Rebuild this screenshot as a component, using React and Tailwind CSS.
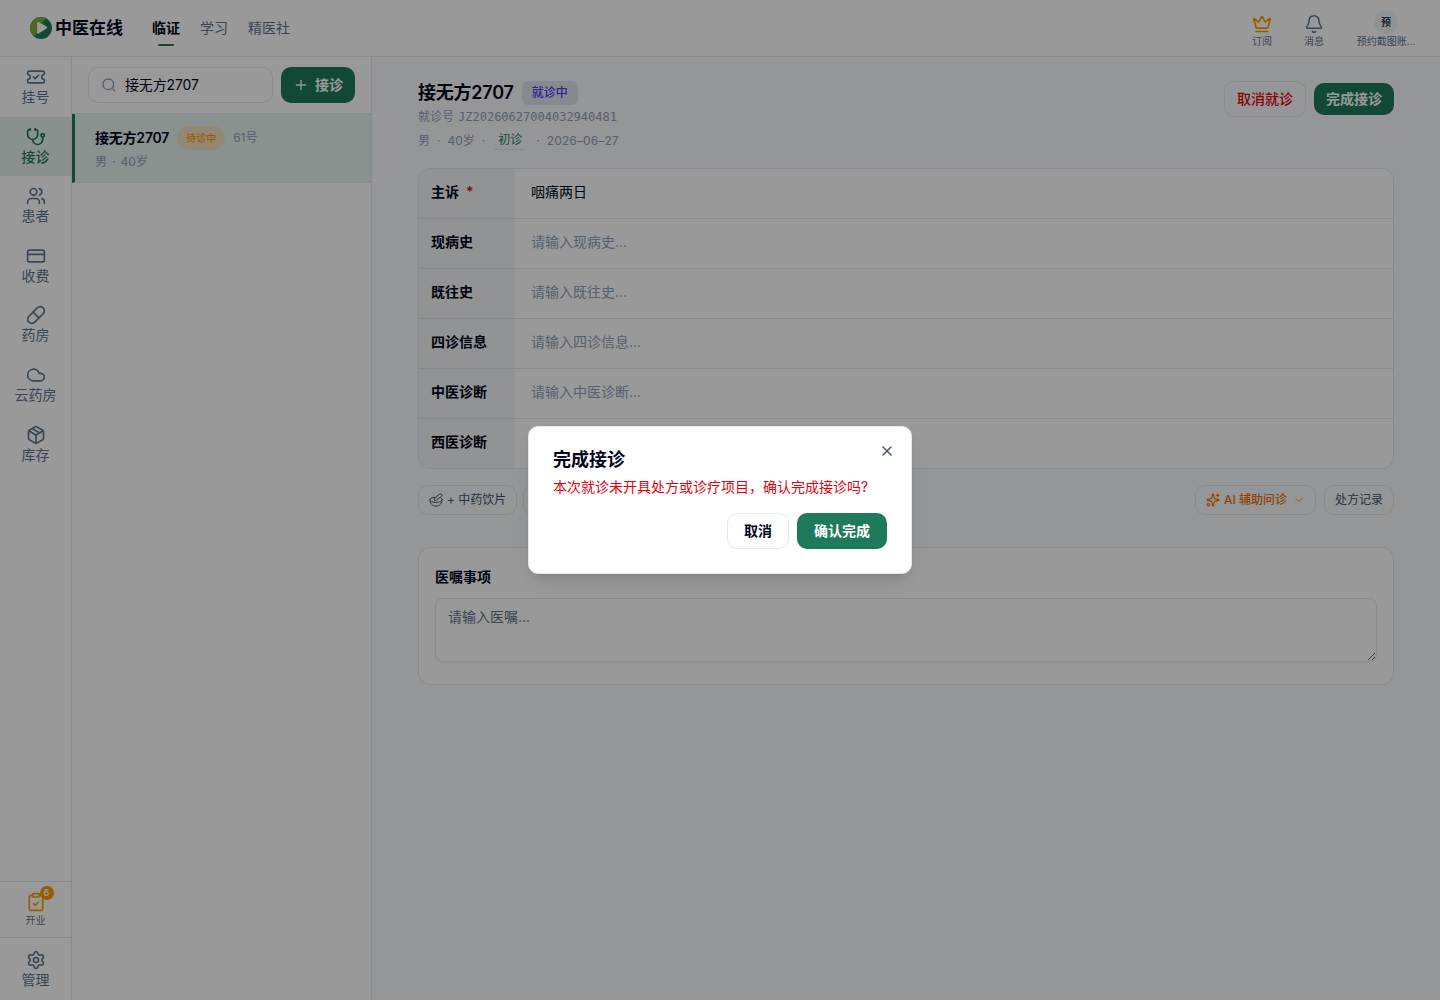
import clsx from 'clsx'
import {
  Bell,
  ChevronDown,
  ClipboardCheck,
  Cloud,
  CreditCard,
  Crown,
  Package,
  Pill,
  Plus,
  Search,
  Settings,
  Sparkles,
  Stethoscope,
  TicketCheck,
  Users,
  X,
} from 'lucide-react'

const NAV = [
  { label: '挂号', icon: TicketCheck },
  { label: '接诊', icon: Stethoscope, active: true },
  { label: '患者', icon: Users },
  { label: '收费', icon: CreditCard },
  { label: '药房', icon: Pill },
  { label: '云药房', icon: Cloud },
  { label: '库存', icon: Package },
]

const FIELDS = [
  { label: '主诉', required: true, value: '咽痛两日' },
  { label: '现病史', placeholder: '请输入现病史...' },
  { label: '既往史', placeholder: '请输入既往史...' },
  { label: '四诊信息', placeholder: '请输入四诊信息...' },
  { label: '中医诊断', placeholder: '请输入中医诊断...' },
  { label: '西医诊断', placeholder: '请输入西医诊断...' },
]

function Logo() {
  return (
    <svg width="22" height="22" viewBox="0 0 22 22">
      <circle cx="11" cy="11" r="11" fill="#1f7a5a" />
      <path d="M16 1.200A11 11 0 0 0 3.200 18.700Q7.500 18.500 7.500 15L8 9Q12.500 6 16 1.200Z" fill="#84a93c" />
      <path d="M7.200 6.200Q7.200 4.600 8.700 5.300L16.600 9.600Q18 10.500 16.600 11.400L8.700 16.600Q7.200 17.200 7.200 15.700Z" fill="#fff" />
    </svg>
  )
}

// mortar with a pestle resting in it
function HerbBowlIcon() {
  return (
    <svg
      width="14"
      height="14"
      viewBox="0 0 24 24"
      fill="none"
      stroke="currentColor"
      strokeWidth="1.700"
      strokeLinecap="round"
      strokeLinejoin="round"
      className="shrink-0"
    >
      <path d="M1.500 11.500C1.500 17 5.500 22.500 12 22.500S22.500 17 22.500 11.500" />
      <path d="M10 7.500C5 7.500 1.500 9 1.500 11.500S6 16 12 16s10.500-2 10.500-4.500c0-1.200-.7-2.200-2-3" />
      <path d="M9.500 12.500C8 11 8.500 9.500 10 8.500L17.500 2.500C19 1.300 21 1.500 21.800 2.800S22 5.500 20.500 6.500L12.500 12C11.500 12.800 10.300 13.200 9.500 12.500Z" />
    </svg>
  )
}

function NavItem({ label, icon: Icon, active }) {
  return (
    <div
      className={clsx(
        'flex h-[59.6px] w-full flex-col items-center pt-2.5 text-sm leading-[19.6px]',
        active ? 'bg-[#e4f0ec] font-medium text-[#1e7a5a]' : 'text-slate-500'
      )}
    >
      <Icon size={20} className="shrink-0" />
      <span>{label}</span>
    </div>
  )
}

function Header() {
  return (
    <header className="flex h-[57px] shrink-0 items-center border-b border-slate-200 bg-white pr-6 pl-[30px]">
      <div className="flex items-center gap-[3px]">
        <Logo />
        <span className="text-[17px] font-bold leading-6">中医在线</span>
      </div>
      <nav className="ml-[29px] flex gap-5 text-sm text-slate-500">
        <span className="relative font-semibold text-slate-950">
          临证
          <i className="absolute -bottom-2 left-1.5 h-0.5 w-4 rounded-full bg-[#1e7a5a]" />
        </span>
        <span>学习</span>
        <span>精医社</span>
      </nav>
      <div className="ml-auto flex h-9 text-[10px] leading-[14px] text-slate-500">
        <div className="flex w-5 flex-col items-center pt-1">
          <Crown size={20} className="shrink-0 text-amber-500" />
          <span className="whitespace-nowrap">订阅</span>
        </div>
        <div className="ml-8 flex w-5 flex-col items-center pt-1">
          <Bell size={20} strokeWidth={1.8} className="shrink-0" />
          <span className="whitespace-nowrap">消息</span>
        </div>
        <div className="ml-8 flex w-[60px] flex-col items-center">
          <span className="flex size-6 shrink-0 items-center justify-center rounded-full bg-slate-100 font-semibold text-slate-700">
            预
          </span>
          <span className="whitespace-nowrap">预约截图账...</span>
        </div>
      </div>
    </header>
  )
}

function Sidebar() {
  return (
    <aside className="flex w-[72px] shrink-0 flex-col border-r border-slate-200 bg-white">
      {NAV.map((item) => (
        <NavItem key={item.label} {...item} />
      ))}
      <div className="mt-auto flex h-14 flex-col items-center border-t border-slate-200 pt-2.5 text-[10px] leading-[14px] text-slate-500">
        <div className="relative">
          <ClipboardCheck size={20} className="text-amber-500" />
          <span className="absolute -top-1.5 -right-2 flex size-3.5 items-center justify-center rounded-full bg-amber-500 text-[9px] font-semibold text-white">
            6
          </span>
        </div>
        <span className="mt-px">开业</span>
      </div>
      <div className="border-t border-slate-200 pt-0.5">
        <NavItem label="管理" icon={Settings} />
      </div>
    </aside>
  )
}

function PatientList() {
  return (
    <section className="flex w-[300px] shrink-0 flex-col border-r border-slate-200 bg-white">
      <div className="flex gap-2 border-b border-slate-200 px-4 py-2.5">
        <div className="flex h-9 w-[185px] items-center gap-2 rounded-[10px] border border-slate-200 px-3 text-sm tracking-[-0.01em]">
          <Search size={16} className="text-slate-400" />
          接无方2707
        </div>
        <button className="flex h-9 w-[74px] items-center justify-center gap-1.5 rounded-[10px] bg-[#1e7a5a] text-sm font-semibold text-white">
          <Plus size={16} />
          接诊
        </button>
      </div>
      <div className="h-[69px] border-b border-l-[3px] border-b-slate-200 border-l-[#1e7a5a] bg-[#e4f3ed] pt-3 pl-5">
        <div className="flex h-6 items-center gap-2">
          <span className="text-sm font-semibold tracking-[-0.015em]">接无方2707</span>
          <span className="flex h-6 items-center rounded-full bg-[#f6e3c2] px-[9px] text-[10px] font-medium text-amber-500">
            待诊中
          </span>
          <span className="text-xs text-slate-400">61号</span>
        </div>
        <div className="mt-1 text-xs text-slate-400">
          男<span className="mx-[5px]">·</span>40岁
        </div>
      </div>
    </section>
  )
}

function VisitHeader() {
  return (
    <div className="flex h-[87px] items-start justify-between">
      <div>
        <div className="flex h-6 items-center gap-2">
          <h1 className="text-lg font-semibold tracking-[-0.012em]">接无方2707</h1>
          <span className="flex h-6 items-center rounded-md bg-[#e0e4ef] px-[10px] text-xs font-medium text-indigo-600">
            就诊中
          </span>
        </div>
        <div className="mt-1 flex gap-1 text-xs text-slate-400">
          就诊号 <span className="font-['DejaVu_Sans_Mono',monospace]">JZ20260627004032940481</span>
        </div>
        <div className="mt-[7px] flex items-center text-xs text-slate-400">
          <span>男</span>
          <span className="mx-[7px]">·</span>
          <span>40岁</span>
          <span className="ml-[7px]">·</span>
          <span className="mr-[11px] ml-2.5 border-b border-dotted border-slate-300 px-[3px] pb-px text-[#1e7a5a]">初诊</span>
          <span className="mr-[7px]">·</span>
          <span className="tracking-[0.01em]">2026–06–27</span>
        </div>
      </div>
      <div className="flex items-center gap-2 text-sm">
        <button className="h-9 w-[82px] rounded-[10px] border border-slate-200 font-medium text-[#e7000b]">取消就诊</button>
        <button className="h-8 w-20 rounded-[10px] bg-[#1e7a5a] font-semibold text-white">完成接诊</button>
      </div>
    </div>
  )
}

function RecordTable() {
  return (
    <div className="overflow-hidden rounded-xl border border-slate-200 bg-white text-sm">
      {FIELDS.map((field, i) => (
        <div
          key={field.label}
          className={clsx('flex', i < FIELDS.length - 1 ? 'h-[50px] border-b border-slate-200' : 'h-[49px]')}
        >
          <div className="w-24 shrink-0 bg-[#f3f5f8] px-3 pt-[13px] font-semibold">
            {field.label}
            {field.required && <span className="ml-[7px] text-red-600">*</span>}
          </div>
          <div className="px-4 pt-[13px]">
            {field.value || <span className="text-slate-400">{field.placeholder}</span>}
          </div>
        </div>
      ))}
    </div>
  )
}

function Chip({ className, children }) {
  return (
    <button className={clsx('flex h-[30px] items-center rounded-[10px] border border-slate-200 px-2.5 text-xs', className)}>
      {children}
    </button>
  )
}

function Main() {
  return (
    <main className="flex-1 bg-[#f8fafc] px-[46px] pt-6">
      <VisitHeader />
      <RecordTable />
      <div className="mt-4 flex gap-1.5">
        <Chip className="w-[99px] gap-1 whitespace-nowrap text-slate-600">
          <HerbBowlIcon />
          + 中药饮片
        </Chip>
        <Chip className="w-24" />
        <div className="ml-auto flex gap-2">
          <Chip className="w-[121px] gap-1 whitespace-nowrap font-medium text-[#ee6f05]">
            <Sparkles size={14} className="shrink-0" />
            AI 辅助问诊
            <ChevronDown size={12} className="ml-0.5 shrink-0 opacity-80" />
          </Chip>
          <Chip className="w-[70px] whitespace-nowrap text-slate-600">处方记录</Chip>
        </div>
      </div>
      <div className="mt-8 h-[138px] rounded-xl border border-slate-200 bg-white px-4 pt-[19px]">
        <h2 className="text-sm font-semibold">医嘱事项</h2>
        <textarea
          className="mt-[11px] block h-16 w-full rounded-lg border border-slate-200 px-3 py-2 text-sm shadow-xs placeholder:text-slate-500"
          placeholder="请输入医嘱..."
        />
      </div>
    </main>
  )
}

function ConfirmDialog() {
  return (
    <div className="absolute inset-0 flex items-center justify-center bg-black/40">
      <div className="relative h-[148px] w-96 rounded-[10px] border border-slate-200 bg-white p-6 shadow-lg">
        <h2 className="text-lg leading-[18px] font-semibold">完成接诊</h2>
        <p className="mt-2 text-sm text-[#e7000b]">本次就诊未开具处方或诊疗项目，确认完成接诊吗?</p>
        <div className="mt-4 flex justify-end gap-2 text-sm font-semibold">
          <button className="h-9 w-[62px] rounded-[10px] border border-slate-200">取消</button>
          <button className="h-9 w-[90px] rounded-[10px] bg-[#1e7a5a] text-white">确认完成</button>
        </div>
        <X size={16} className="absolute top-4 right-4 text-slate-600" />
      </div>
    </div>
  )
}

export default function App() {
  return (
    <div className="relative flex h-[1000px] w-full flex-col overflow-hidden font-['Inter','Noto_Sans_CJK_SC',sans-serif] text-slate-950">
      <Header />
      <div className="flex min-h-0 flex-1">
        <Sidebar />
        <PatientList />
        <Main />
      </div>
      <ConfirmDialog />
    </div>
  )
}
